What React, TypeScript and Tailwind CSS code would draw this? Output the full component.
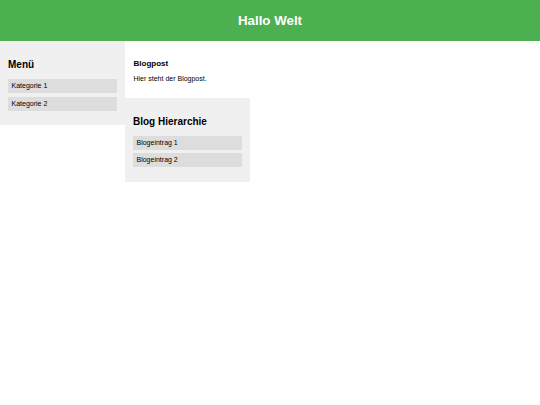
import React from 'react';

const Item: React.FC<{ label: string }> = ({ label }) => (
  <li className="h-[14px] flex items-center pl-[3.5px] bg-[#dddddd] text-[7px] leading-[8px] text-black">
    {label}
  </li>
);

export default function App() {
  return (
    <div className="min-h-[405px] w-[540px] bg-white font-['Liberation_Sans',Arial,sans-serif]">
      <header className="h-[41px] bg-[#4caf50] flex items-center justify-center">
        <h1 className="text-[13.3px] leading-[15px] font-bold text-white">Hallo Welt</h1>
      </header>

      <div className="flex items-start">
        <aside className="w-[125px] bg-[#f0f0f0] px-[8px] pt-[18px] pb-[14.5px]">
          <h2 className="text-[10px] leading-[12px] font-bold text-black mb-[8px]">Menü</h2>
          <ul className="flex flex-col gap-[3.5px]">
            <Item label="Kategorie 1" />
            <Item label="Kategorie 2" />
          </ul>
        </aside>

        <div className="flex flex-col w-[125px]">
          <article className="px-[8.5px] pt-[18px] pb-[14.5px]">
            <h3 className="text-[8px] leading-[10px] font-bold text-black mb-[6px]">Blogpost</h3>
            <p className="text-[7px] leading-[8px] text-black">Hier steht der Blogpost.</p>
          </article>

          <section className="bg-[#f0f0f0] px-[8px] pt-[18px] pb-[14.5px]">
            <h2 className="text-[10px] leading-[12px] font-bold text-black mb-[8px]">Blog Hierarchie</h2>
            <ul className="flex flex-col gap-[3.5px]">
              <Item label="Blogeintrag 1" />
              <Item label="Blogeintrag 2" />
            </ul>
          </section>
        </div>
      </div>
    </div>
  );
}
